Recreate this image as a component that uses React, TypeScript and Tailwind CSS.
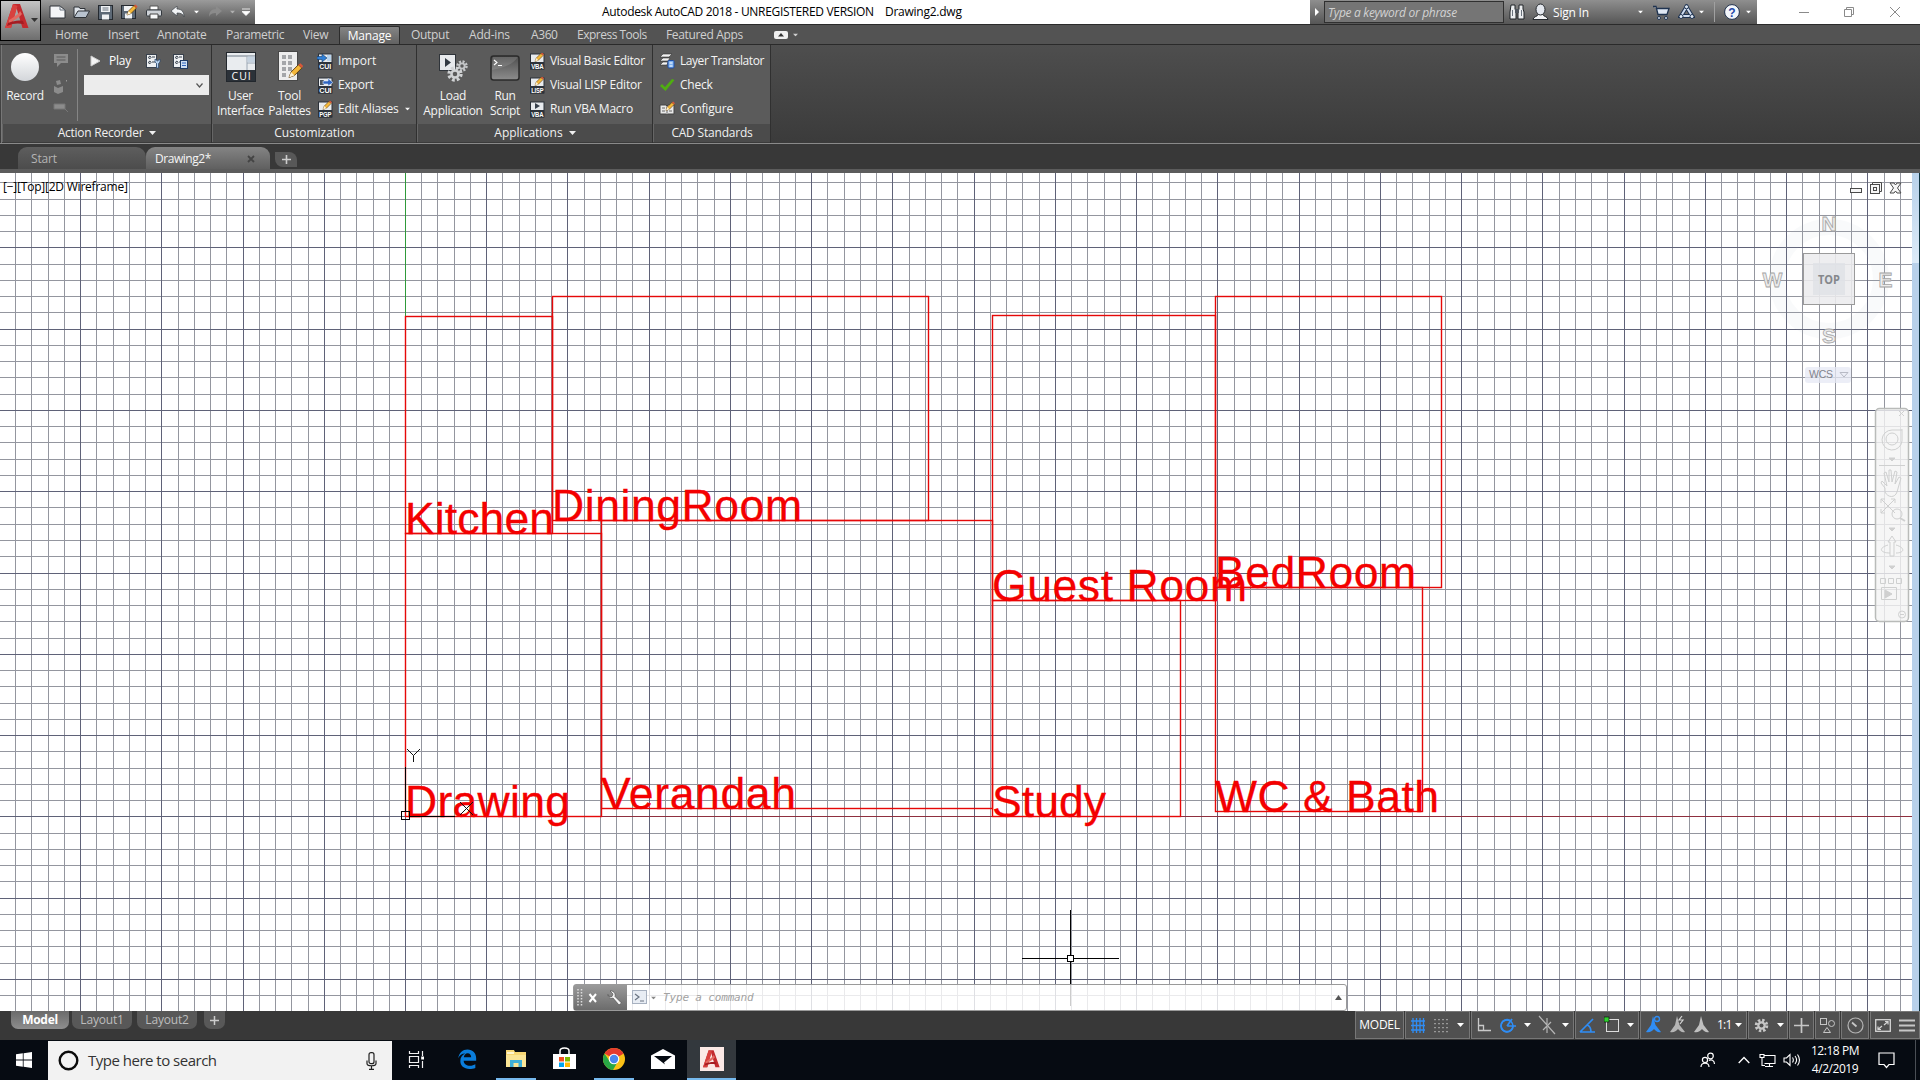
import React from "react";

type P = { children?: React.ReactNode; className?: string };

const Caret = ({ className = "" }: P) => (
  <svg width="7" height="4" viewBox="0 0 7 4" className={`shrink-0 ${className}`}><path d="M0 0h7L3.500 4z" fill="currentColor" /></svg>
);

const Svg = ({ children, w = 16, h = 16, vb, className = "" }: P & { w?: number; h?: number; vb?: string }) => (
  <svg width={w} height={h} viewBox={vb ?? `0 0 ${w} ${h}`} className={`shrink-0 ${className}`} fill="none">{children}</svg>
);

/* ---------- logo ---------- */
const LogoA = ({ w, h }: { w: number; h: number }) => (
  <svg width={w} height={h} viewBox="0 0 24 27" className="shrink-0">
    <path d="M8 1h7l8.500 24h-6L11.500 5 6 25H0z" fill="#c22a2e" />
    <path d="M8 1l4.500 2L6 25H0z" fill="#d8413f" />
    <path d="M4 17c5-3 10-6 11-9l2 3c-2 3-7 6-13 9z" fill="#e36a62" />
    <path d="M3 20c6-2 10-3 15-2l1 3c-6-1-11-1-17 2z" fill="#a51c22" />
  </svg>
);

/* ---------- small icons ---------- */
const Pencil = ({ x = 0, y = 0, s = 1 }: { x?: number; y?: number; s?: number }) => (
  <g transform={`translate(${x} ${y}) scale(${s})`}>
    <path d="M0 10l1.500-4L7 .500l2.500 2.500L4 8.500z" fill="#f5b83a" stroke="#5b3b10" strokeWidth=".7" />
    <path d="M7 .500L9.500 3l1-1.500L8.500-.500z" fill="#d9573a" />
    <path d="M0 10l1.500-4L4 8.500z" fill="#fff1d0" />
  </g>
);

const BadgeIcon = ({ label, kind }: { label: string; kind: "in" | "out" | "pen" | "play" }) => (
  <Svg w={16} h={17}>
    <rect x="1.500" y="1" width="13.500" height="15" fill="#e8ebee" stroke="#2b3038" />
    <rect x="1.500" y="9" width="13.500" height="7.500" fill="#2d333b" />
    <text x="8.300" y="15.500" fontSize="7" fontWeight="700" fill="#fff" textAnchor="middle" fontFamily="Liberation Sans, sans-serif" textLength="12" lengthAdjust="spacingAndGlyphs">{label}</text>
    {kind === "in" && <><path d="M10 2v6h4V2z" fill="#b8d4ee" /><path d="M0 3.500h5V1l5 4-5 4V6.500H0z" fill="#2f7fd6" stroke="#163a66" strokeWidth=".6" /></>}
    {kind === "out" && <><path d="M3 3h4v5H3z" fill="#4a5563" /><path d="M6 4h5V1.500L16 5.500 11 9V7H6z" fill="#2f65c0" stroke="#d9e6f7" strokeWidth=".6" /></>}
    {kind === "pen" && <Pencil x={6} y={0} s={0.85} />}
    {kind === "play" && <path d="M6 2l5 3-5 3z" fill="#39424e" />}
  </Svg>
);

const PlayListIcon = ({ alt = false }: { alt?: boolean }) => (
  <Svg w={16} h={16}>
    <rect x="1.500" y="1.500" width="10" height="13" fill="#eef0f2" stroke="#39424e" />
    <path d="M3.500 4l1.500-1 1 1.500L4.500 6zM3.500 9l1.500-1 1 1.500-1.500 1.500zM7 4h3M7 9h3" stroke="#39424e" strokeWidth="1" />
    {alt ? (
      <><rect x="8.500" y="7.500" width="7" height="8" fill="#cfe0f3" stroke="#1f3c66" /><path d="M10 10h4M10 12.500h4" stroke="#2f65c0" /></>
    ) : (
      <path d="M10 6v3l1.500 1.500V15h2v-4.500L15 9V6l-2.500 2z" fill="#b9d3ee" stroke="#26456f" strokeWidth=".7" />
    )}
  </Svg>
);

const Gear = ({ cx, cy, r, c, hole }: { cx: number; cy: number; r: number; c: string; hole: string }) => (
  <g>
    <circle cx={cx} cy={cy} r={r} fill="none" stroke={c} strokeWidth={r * 0.55} strokeDasharray={`${r * 0.45} ${r * 0.335}`} />
    <circle cx={cx} cy={cy} r={r * 0.8} fill={c} />
    <circle cx={cx} cy={cy} r={r * 0.38} fill={hole} />
  </g>
);

/* ---------- title bar ---------- */
const QuickAccess = () => (
  <div className="flex h-6 w-[214px] items-center bg-gradient-to-b from-[#9b9b9b] to-[#555] pl-[8px] text-white">
    <Svg w={17} h={14}><path d="M1 1h10l5 4v8H1z" fill="#f4f5f7" stroke="#2f3338" /><path d="M11 1v4h5" stroke="#6b7480" /></Svg>
    <Svg w={17} h={14} className="ml-[7px]"><path d="M1 12V2h5l1 1.500h5V6" fill="#dfe4ea" stroke="#2f3338" /><path d="M1 12.500L5 6h11.500L13 12.500z" fill="#b9c3cf" stroke="#2f3338" /></Svg>
    <Svg w={15} h={15} className="ml-[8px]"><rect x=".5" y=".5" width="14" height="14" fill="#5d6976" stroke="#252a30" /><path d="M3 1h9v6H3zM4 9.500h7v5H4z" fill="#f0f2f4" /><path d="M4.500 3h6M4.500 5h6" stroke="#69737f" /></Svg>
    <Svg w={17} h={16} className="ml-[8px]"><rect x=".5" y="1.500" width="14" height="13" fill="#5d6976" stroke="#252a30" /><path d="M3 2h9v5H3zM4 9.500h7v5H4z" fill="#f0f2f4" /><Pencil x={6} y={1} s={1} /></Svg>
    <Svg w={16} h={15} className="ml-[8px]"><path d="M4 1h8v4H4z" fill="#fff" stroke="#555" /><rect x=".5" y="5" width="15" height="6" rx="1" fill="#cfd3d8" stroke="#33383e" /><path d="M4 9h8v5H4z" fill="#f6f7f8" stroke="#444" /></Svg>
    <Svg w={15} h={12} className="ml-[8px]"><path d="M1 5l6-5v3c5 0 7 3 7 8-1-3-3-4-7-4v3z" fill="#f1f3f5" stroke="#41464c" strokeWidth=".7" /></Svg>
    <Caret className="ml-[8px] scale-75" />
    <Svg w={15} h={12} className="ml-[8px]"><path d="M14 5L8 0v3C3 3 1 6 1 11c1-3 3-4 7-4v3z" fill="#8b8b8b" /></Svg>
    <Caret className="ml-[6px] scale-75 text-[#b0b0b0]" />
    <Svg w={8} h={8} className="ml-[6px]"><path d="M0 1h8M0 3.500h8L4 7.500z" fill="#fff" stroke="#fff" strokeWidth=".8" /></Svg>
  </div>
);

const InfoBar = () => (
  <div className="flex h-6 w-[447px] items-center bg-gradient-to-b from-[#8f8f8f] to-[#565656] text-white">
    <Svg w={14} h={10}><path d="M5 1l4 4-4 4z" fill="#fff" /></Svg>
    <div className="flex h-[22px] w-[180px] items-center border border-[#303030] bg-[#757575] pl-[3px] pt-px text-[12px] italic tracking-[-0.3px] text-[#d2d2d2]">Type a keyword or phrase</div>
    <Svg w={16} h={16} className="ml-[5px]">
      <path d="M2 1h4v4l1 2v8H1V8zM10 1h4v4l1 3v7H9V7l1-2z" fill="#eceef0" stroke="#202428" /><path d="M6 5h4v4H6z" fill="#50565e" /><path d="M3.500 6v6M12.500 6v6" stroke="#6a737d" />
    </Svg>
    <Svg w={17} h={18} className="ml-[7px]"><path d="M1 16.500c0-3 5-3 5-5h5c0 2 5 2 5 5z" fill="#f2f3f5" stroke="#25292e" /><ellipse cx="8.500" cy="6.500" rx="4.500" ry="5.500" fill="#e3e7ee" stroke="#25292e" /></Svg>
    <span className="ml-[4px] w-[84px] pt-px text-[12px] tracking-[-0.2px]">Sign In</span>
    <Caret className="scale-75" />
    <Svg w={17} h={15} className="ml-[9px]"><path d="M0 1.500h3l2 8h9l2-6H4" fill="#dfe8f4" stroke="#1f3350" strokeWidth="1.300" /><circle cx="6" cy="13" r="1.500" fill="#dfe8f4" stroke="#1f3350" /><circle cx="13" cy="13" r="1.500" fill="#dfe8f4" stroke="#1f3350" /></Svg>
    <Svg w={17} h={16} className="ml-[8px]"><path d="M8.500 3L3 12h11z" stroke="#1f3350" strokeWidth="4" /><path d="M8.500 3L3 12h11z" stroke="#cfdcf0" strokeWidth="2" /><circle cx="8.500" cy="2.800" r="2" fill="#dfe8f4" stroke="#1f3350" /><circle cx="3" cy="12.500" r="2" fill="#dfe8f4" stroke="#1f3350" /><circle cx="14" cy="12.500" r="2" fill="#dfe8f4" stroke="#1f3350" /></Svg>
    <Caret className="ml-[3px] scale-75" />
    <div className="ml-[9px] h-5 w-px bg-[#a0a0a0]" />
    <Svg w={16} h={16} className="ml-[9px]"><circle cx="8" cy="8" r="7.400" fill="#f3f6fb" stroke="#20304c" /><text x="8" y="12.500" fontSize="12" fontWeight="700" fill="#2347a8" textAnchor="middle" fontFamily="Liberation Sans, sans-serif">?</text></Svg>
    <Caret className="ml-[5px] scale-75" />
  </div>
);

const TitleBar = () => (
  <div className="flex h-6 bg-white pl-[41px]">
    <QuickAccess />
    <div className="flex w-[1055px] items-center whitespace-pre pl-[347px] text-[12px] text-black">
      <span className="w-[283px] tracking-[-0.32px]">Autodesk AutoCAD 2018 - UNREGISTERED VERSION</span>
      <span className="tracking-[-0.25px]">Drawing2.dwg</span>
    </div>
    <InfoBar />
    <div className="flex items-center pl-[41px]">
      <Svg w={12} h={12}><path d="M1 6.500h10" stroke="#8a8a8a" /></Svg>
      <Svg w={12} h={12} className="ml-[33px]"><path d="M3.500 3V1.500h7v7H9M1.500 3.500h7v7h-7z" stroke="#8a8a8a" /></Svg>
      <Svg w={12} h={12} className="ml-[34px]"><path d="M1 1l10 10M11 1L1 11" stroke="#8a8a8a" /></Svg>
    </div>
  </div>
);

/* ---------- ribbon ---------- */
const RibbonTabs = () => (
  <div className="flex h-[21px] items-center border-b border-t border-[#2a2a2a] bg-[#535353] pl-[55px] text-[12px] text-[#d0d0d0]">
    <span className="w-[53px] tracking-[-0.2px]">Home</span>
    <span className="w-[49px] tracking-[-0.2px]">Insert</span>
    <span className="w-[69px] tracking-[-0.25px]">Annotate</span>
    <span className="w-[77px] tracking-[-0.3px]">Parametric</span>
    <span className="w-[36px] tracking-[-0.2px]">View</span>
    <span className="flex h-[18px] w-[61px] items-center justify-center self-end rounded-t-[2px] border-x border-t border-[#2c2c2c] bg-gradient-to-b from-[#858585] to-[#626262] tracking-[-0.2px] text-white">Manage</span>
    <span className="ml-[11px] w-[58px] tracking-[-0.3px]">Output</span>
    <span className="w-[62px] tracking-[-0.2px]">Add-ins</span>
    <span className="w-[46px] tracking-[-0.4px]">A360</span>
    <span className="w-[89px] tracking-[-0.5px]">Express Tools</span>
    <span className="w-[108px] tracking-[-0.35px]">Featured Apps</span>
    <Svg w={14} h={8}><rect width="14" height="8" rx="2" fill="#f0f0f0" /><path d="M4 5.500L7 2l3 3.500z" fill="#333" /></Svg>
    <Caret className="ml-[4px] scale-75" />
  </div>
);

const Panel = ({ title, children, className = "", arrow = false }: P & { title: string; arrow?: boolean }) => (
  <div className={`flex h-[98px] flex-col border-r border-[#303030] ${className}`}>
    <div className="flex h-[79px] bg-[#5b5b5b] pt-[4px]">{children}</div>
    <div className="flex h-[18px] items-center justify-center gap-[6px] border-l border-[#666] bg-[#4b4b4b] text-[12px] text-[#f0f0f0]">
      {title}
      {arrow && <Caret />}
    </div>
  </div>
);

const Small = ({ icon, children, className = "" }: P & { icon: React.ReactNode }) => (
  <div className={`flex h-6 items-center whitespace-nowrap text-[12px] text-[#f4f4f4] ${className}`}>
    <span className="mr-[5px] flex w-4 justify-center">{icon}</span>
    {children}
  </div>
);

const Large = ({ icon, lines, className = "" }: { icon: React.ReactNode; lines: string[]; className?: string }) => (
  <div className={`flex flex-col items-center text-center text-[12px] leading-[15px] tracking-[-0.3px] text-[#f4f4f4] ${className}`}>
    <div className="mb-[4px] flex h-[35px] items-center justify-center">{icon}</div>
    {lines.map((l) => <span key={l} className="whitespace-nowrap">{l}</span>)}
  </div>
);

const Ribbon = () => (
  <div className="flex h-[99px] border-b border-[#8a8a8a] bg-gradient-to-b from-[#4e4e4e] to-[#3b3b3b] pl-px">
    <Panel title="Action Recorder" arrow className="w-[211px] border-l border-l-[#777] tracking-[-0.25px]">
      <Large className="w-[46px]" icon={<Svg w={30} h={30}><defs><linearGradient id="rec" x1="0" y1="0" x2="0" y2="1"><stop offset="0" stopColor="#fff" /><stop offset="1" stopColor="#d3d6da" /></linearGradient></defs><circle cx="15" cy="15" r="14" fill="url(#rec)" /></Svg>} lines={["Record"]} />
      <div className="flex w-[25px] flex-col items-center pt-[4px] text-[#8c8c8c]">
        <Svg w={16} h={14}><path d="M1 1h14v9H8l-4 4v-4H1z" fill="#8c8c8c" /><path d="M3.500 4h9M3.500 7h9" stroke="#5b5b5b" /></Svg>
        <Svg w={16} h={15} className="mt-[12px]"><path d="M1 7l4 2 5-2v6l-5 2-4-2zM3 2l4-1 1 4-4 1z" fill="#8c8c8c" /><path d="M13.500 1v1.500" stroke="#999" /></Svg>
        <Svg w={16} h={10} className="mt-[8px]"><path d="M1 2h11v5H1zM12 7l3 3" fill="#8c8c8c" stroke="#777" /></Svg>
      </div>
      <div className="ml-[4px] h-[72px] w-px bg-[#858585]" />
      <div className="w-[132px] pl-[6px]">
        <div className="flex h-6 items-center text-[12px] text-white">
          <Svg w={11} h={12} className="ml-[6px]"><path d="M1 1l9 5-9 5z" fill="#f5f5f5" stroke="#ccc" /></Svg>
          <span className="ml-[8px] w-[36px]">Play</span>
          <PlayListIcon /><span className="w-[11px]" /><PlayListIcon alt />
        </div>
        <div className="mt-[2px] flex h-[20px] w-[125px] items-center justify-end bg-[#ececec] pr-[6px]">
          <Svg w={7} h={5}><path d="M.5.500l3 3.500 3-3.500" stroke="#555" strokeWidth="1.200" /></Svg>
        </div>
      </div>
    </Panel>
    <Panel title="Customization" className="w-[205px]">
      <Large className="w-[55px] pl-[2px]" icon={<Svg w={30} h={30}><rect x=".5" y=".5" width="29" height="29" fill="#e9ecef" stroke="#22272d" /><path d="M1 4h28" stroke="#6f7a87" /><path d="M21 4v14M21 11h8" stroke="#9aa6b3" /><rect x="21.500" y="4.500" width="7.500" height="6" fill="#c5d2df" /><rect x="1" y="18" width="28" height="11" fill="#2b3138" /><text x="15" y="27.500" fontSize="10.500" fill="#fff" textAnchor="middle" fontFamily="Open Sans, sans-serif" textLength="19">CUI</text></Svg>} lines={["User", "Interface"]} />
      <Large className="ml-[-1px] w-[47px]" icon={<Svg w={30} h={31}><rect x="3.500" y=".5" width="19" height="29" fill="#ededed" stroke="#474747" /><g fill="#a4a6a9"><rect x="7" y="4" width="4" height="4" /><rect x="13" y="4" width="4" height="4" /><rect x="7" y="10" width="4" height="4" /><rect x="13" y="10" width="4" height="4" /><rect x="7" y="16" width="4" height="4" /><rect x="13" y="16" width="4" height="4" /><rect x="7" y="22" width="4" height="4" /></g><Pencil x={14} y={13} s={1.35} /></Svg>} lines={["Tool", "Palettes"]} />
      <div className="ml-[4px]">
        <Small icon={<BadgeIcon label="CUI" kind="in" />}>Import</Small>
        <Small className="tracking-[-0.2px]" icon={<BadgeIcon label="CUI" kind="out" />}>Export</Small>
        <Small className="tracking-[-0.2px]" icon={<BadgeIcon label="PGP" kind="pen" />}><span>Edit Aliases</span><Caret className="ml-[5px] scale-75" /></Small>
      </div>
    </Panel>
    <Panel title="Applications" arrow className="w-[236px]">
      <Large className="w-[71px] pl-[1px]" icon={<Svg w={30} h={30}><rect x="1.500" y="2.500" width="16" height="16" fill="#e7e9ec" stroke="#2f343a" /><path d="M7 6l6 4.500L7 15z" fill="#333a43" /><Gear cx={24} cy={14} r={4.5} c="#c4c6c8" hole="#5b5b5b" /><Gear cx={17} cy={22} r={6} c="#d0d2d4" hole="#5b5b5b" /></Svg>} lines={["Load", "Application"]} />
      <Large className="w-[34px]" icon={<Svg w={30} h={30}><defs><linearGradient id="scr" x1="0" y1="0" x2="0" y2="1"><stop offset="0" stopColor="#4e4e4e" /><stop offset="1" stopColor="#8d8d8d" /></linearGradient></defs><rect x="1" y="4" width="28" height="24" rx="2.500" fill="url(#scr)" stroke="#2b2b2b" strokeWidth="1.500" /><path d="M2 18C10 16 22 14 28 5H3z" fill="#fff" opacity=".12" /><path d="M4 8l3 2.500L4 13M8 13.500h4" stroke="#fff" strokeWidth="1.100" /></Svg>} lines={["Run", "Script"]} />
      <div className="ml-[7px]">
        <Small className="tracking-[-0.36px]" icon={<BadgeIcon label="VBA" kind="pen" />}>Visual Basic Editor</Small>
        <Small className="tracking-[-0.25px]" icon={<BadgeIcon label="LISP" kind="pen" />}>Visual LISP Editor</Small>
        <Small className="tracking-[-0.25px]" icon={<BadgeIcon label="VBA" kind="play" />}>Run VBA Macro</Small>
      </div>
    </Panel>
    <Panel title="CAD Standards" className="w-[118px] tracking-[-0.2px]">
      <div className="ml-[6px]">
        <Small className="tracking-[-0.45px]" icon={<Svg w={16} h={16}><path d="M4 1h9l-3 3H1zM4 5h7l-2 3H1zM4 9h5l-1 3H1z" fill="#f2f2f2" stroke="#333" strokeWidth=".6" /><rect x="9" y="7.500" width="6" height="7.500" rx="1" fill="#7fb2f0" stroke="#1e4fa8" /><path d="M10.500 10h3M10.500 13h3" stroke="#fff" /></Svg>}>Layer Translator</Small>
        <Small icon={<Svg w={16} h={16}><path d="M1 9l2-2 3 3 7-8 2.500 1L6.500 14z" fill="#4fae10" /></Svg>}>Check</Small>
        <Small icon={<Svg w={16} h={16}><path d="M1 4h6l1 1 1-1h6v9H9l-1 1-1-1H1z" fill="#e9e9e9" stroke="#444" /><path d="M3 7h3M3 10h3M10 10h3M8 5v9" stroke="#666" /><Pencil x={7} y={1} s={0.85} /></Svg>}>Configure</Small>
      </div>
    </Panel>
  </div>
);

const FileTabs = () => (
  <div className="flex h-[29px] items-end border-b-4 border-[#5c5c5c] bg-[#383838] pl-[18px] text-[12px]">
    <div className="flex h-[22px] w-[128px] items-center rounded-tl-[9px] rounded-tr-[10px] bg-gradient-to-b from-[#5e5e5e] to-[#4c4c4c] pl-[13px] pt-px tracking-[-0.2px] text-[#b4b4b4]">Start</div>
    <div className="flex h-[22px] w-[124px] items-center rounded-t-[9px] bg-gradient-to-b from-[#848484] to-[#606060] pl-[9px] pt-px text-[#f5f5f5]">
      <span className="w-[92px] tracking-[-0.45px]">Drawing2*</span>
      <Svg w={8} h={8}><path d="M1 1l6 6M7 1L1 7" stroke="#444" strokeWidth="1.800" /></Svg>
    </div>
    <div className="mb-[2px] ml-[5px] flex h-[15px] w-[22px] items-center justify-center rounded-bl-[8px] rounded-tr-[8px] bg-[#585858]">
      <Svg w={9} h={9}><path d="M4.500 0v9M0 4.500h9" stroke="#ccc" strokeWidth="1.600" /></Svg>
    </div>
  </div>
);

/* ---------- drawing area ---------- */
const PITCH_X = 16.248;
const PITCH_Y = 16.256;
const OX = 405.5;
const OY = 816.35;
const colX = (k: number) => Math.floor(OX + k * PITCH_X);
const rowY = (k: number) => Math.round(OY + k * PITCH_Y);
const cols = Array.from({ length: 118 }, (_, i) => i - 24).filter((k) => colX(k) < 1912 && colX(k) > 0);
const rows = Array.from({ length: 52 }, (_, i) => i - 39).filter((k) => rowY(k) > 173 && rowY(k) < 1011);

const rooms: { name: string; x: number; y: number; r: number; b: number; len: number }[] = [
  { name: "Kitchen", x: 405, y: 316, r: 552, b: 533, len: 149 },
  { name: "Drawing", x: 405, y: 533, r: 601, b: 816, len: 165 },
  { name: "DiningRoom", x: 552, y: 296, r: 928, b: 520, len: 250 },
  { name: "Verandah", x: 601, y: 520, r: 992, b: 808, len: 195 },
  { name: "Guest Room", x: 992, y: 315, r: 1215, b: 600, len: 255 },
  { name: "Study", x: 992, y: 600, r: 1180, b: 816, len: 114 },
  { name: "BedRoom", x: 1215, y: 296, r: 1441, b: 587, len: 201 },
  { name: "WC & Bath", x: 1215, y: 587, r: 1422, b: 811, len: 224 },
];

const Plan = () => (
  <svg width="1912" height="838" viewBox="0 173 1912 838" className="block" fill="none">
    <rect x="0" y="173" width="1912" height="838" fill="#fff" />
    <g shapeRendering="crispEdges">
      {cols.filter((k) => k % 5).map((k) => <rect key={k} x={colX(k)} y="173" width="1" height="838" fill="#94969f" />)}
      {rows.filter((k) => k % 5).map((k) => <rect key={k} x="0" y={rowY(k)} width="1912" height="1" fill="#94969f" />)}
      {cols.filter((k) => k % 5 === 0).map((k) => <rect key={k} x={colX(k)} y="173" width="1" height="838" fill="#5f6278" />)}
      {rows.filter((k) => k % 5 === 0).map((k) => <rect key={k} x="0" y={rowY(k)} width="1912" height="1" fill="#5f6278" />)}
      <rect x="405" y="173" width="1" height="143" fill="#2f9a3a" />
      <rect x="405" y="816" width="1507" height="1" fill="#8f2f3f" />
    </g>
    <g stroke="#e60808" strokeWidth="1.400">
      {rooms.map((m) => <rect key={m.name} x={m.x + 0.5} y={m.y + 0.5} width={m.r - m.x} height={m.b - m.y} />)}
    </g>
    <g fill="#f40000" stroke="#f40000" strokeWidth=".3" fontFamily="Liberation Sans, Arial, sans-serif" fontSize="44.500">
      {rooms.map((m) => <text key={m.name} x={m.x} y={m.b + 0.7} textLength={m.len}>{m.name}</text>)}
    </g>
    <g stroke="#000" shapeRendering="crispEdges">
      <path d="M405.500 767v45M409 816.500h46" />
      <rect x="401.500" y="811.500" width="8" height="8" />
    </g>
    <path d="M407 749l6.500 6.500L420 749M413.500 755.500v6.500M460 802l13 13M473 802l-13 13" stroke="#111" />
    <g stroke="#000" shapeRendering="crispEdges">
      <path d="M1070.500 910v45M1070.500 962v44M1022 958.500h46M1074 958.500h45" />
      <rect x="1067.500" y="955.500" width="6" height="6" fill="#fff" />
    </g>
  </svg>
);

const ViewCube = () => (
  <svg width="140" height="220" viewBox="1758 190 140 220" className="absolute left-[1758px] top-[17px]" fill="none">
    <circle cx="1829" cy="279" r="52" stroke="#aab4c4" strokeOpacity=".07" strokeWidth="16" />
    <rect x="1803.500" y="253.500" width="51" height="51" fill="#ececee" fillOpacity=".88" stroke="#9a9a9a" />
    <rect x="1813" y="263" width="32" height="32" fill="#dfe1e6" fillOpacity=".8" />
    <text x="1829" y="283.800" fontSize="13" fontWeight="700" fill="#85888c" textAnchor="middle" textLength="22" lengthAdjust="spacingAndGlyphs" fontFamily="Open Sans, sans-serif">TOP</text>
    <g fontFamily="Liberation Sans, sans-serif" fontSize="21" fontWeight="700" fill="#ececec" stroke="#a5a5a5" strokeWidth=".8" textAnchor="middle">
      <text x="1829" y="231">N</text><text x="1829" y="342.500">S</text><text x="1772.500" y="287">W</text><text x="1885.500" y="287">E</text>
    </g>
    <rect x="1805" y="367" width="46" height="16" rx="3" fill="#e6e8f4" fillOpacity=".75" />
    <text x="1809" y="378" fontSize="10.500" fill="#80838c" textLength="24" fontFamily="Liberation Sans, sans-serif">WCS</text>
    <path d="M1840 372.500h8l-4 4.500z" stroke="#b7bac5" />
  </svg>
);

const NavBar = () => (
  <svg width="36" height="216" viewBox="1874 407 36 216" className="absolute left-[1874px] top-[234px]" fill="none" stroke="#cfd0d0" strokeWidth="1">
    <rect x="1875.500" y="408.500" width="33" height="213" rx="4" fill="#f4f4f4" fillOpacity=".8" stroke="#b9bbb9" strokeWidth="1.500" />
    <path d="M1899 411l5 5M1904 411l-5 5" />
    <path d="M1902 429v12a10 10 0 1 1-10-11h10" /><circle cx="1892" cy="439" r="6" />
    <path d="M1889 458h6l-3 3zM1889 528h6l-3 3zM1889 566h6l-3 3z" fill="#d0d0d0" />
    <path d="M1879 465.500h26" />
    <path d="M1885 488l-4-5 1-2 5 5-3-13 2-1 3 10 0-12 2 0 1 12 3-11 2 1-2 12 4-7 2 1-4 14c-2 6-9 6-12 0z" />
    <path d="M1881 499l14 14M1895 499l-14 14M1881 503v-4h4M1891 499h4v4M1881 509v4h4" /><circle cx="1897" cy="514" r="5" /><path d="M1900 518l5 3" strokeWidth="2" />
    <path d="M1890 556v-14h-2l4-6 4 6h-2v14zM1888 545c-10 3-8 8 2 8M1896 545c10 3 8 8 0 8" />
    <path d="M1880.500 578.500h5v5h-5zM1888.500 578.500h5v5h-5zM1896.500 578.500h5v5h-5zM1881.500 587.500h15v12h-15z" /><path d="M1885 590l7 4-7 4z" fill="#d0d0d0" />
    <circle cx="1902" cy="614.500" r="3.500" /><path d="M1900 614.500h4" />
  </svg>
);

const CommandBar = () => (
  <div className="absolute left-[573px] top-[811px] flex h-[27px] w-[774px] items-center rounded-[3px] border border-[#9a9a9a] bg-white/80">
    <div className="flex h-full w-[53px] items-center bg-gradient-to-b from-[#9a9a9a] to-[#6c6c6c]">
      <Svg w={6} h={18} className="ml-[3px]"><path d="M1 0v18M4.500 0v18" stroke="#ddd" strokeWidth="1.500" strokeDasharray="1.500 1.500" /></Svg>
      <Svg w={10} h={10} className="ml-[5px]"><path d="M1.500 1l6.500 8M8 1L1.500 9" stroke="#fff" strokeWidth="2" /></Svg>
      <Svg w={16} h={16} className="ml-[9px]"><path d="M3 1l3 3-1 2.500L2.500 7 1 4.500C1 8 4 9 6 8l6 7 2.500-2L8 6.500C9 3 6 .500 3 1z" fill="#f4f4f4" stroke="#444" strokeWidth=".6" /></Svg>
    </div>
    <Svg w={16} h={15} className="ml-[5px]"><rect x=".5" y=".5" width="14" height="13" fill="#e8edf4" stroke="#a7b1c0" /><path d="M3 4l4 3-4 3M8 11h4" stroke="#6a7482" strokeWidth="1.200" /></Svg>
    <Caret className="ml-[2px] scale-75 text-[#888]" />
    <span className="ml-[6px] pt-px font-['DejaVu_Sans_Mono','Liberation_Mono',monospace] text-[11px] italic tracking-[-0.16px] text-[#a2a2a2]">Type a command</span>
    <Svg w={7} h={5} className="ml-auto mr-[4px]"><path d="M0 5h7L3.500 0z" fill="#555" /></Svg>
  </div>
);

const Viewport = () => (
  <div className="relative flex h-[838px] bg-white">
    <Plan />
    <div className="w-[7px] bg-[#b8d1ea]"><div className="h-[90px] bg-gradient-to-b from-[#b8d1ea] to-[#dcebf8]" /></div>
    <div className="w-px bg-[#0d3340]" />
    <div className="absolute left-[3px] top-[6px] text-[12px] leading-[16px] tracking-[-0.22px] text-black">[−][Top][2D Wireframe]</div>
    <svg width="54" height="14" viewBox="0 0 54 14" className="absolute left-[1849px] top-[8px]" fill="#f6f6f6" stroke="#4a4a4a">
      <rect x="1.500" y="7.500" width="11" height="4" />
      <path d="M23.500 3.500v-2h9v9h-2" /><rect x="21.500" y="3.500" width="9" height="9" /><rect x="24.500" y="6.500" width="3" height="3" />
      <path d="M41 2h4l1.500 2L48 2h4l-3.500 5 3.500 5h-4l-1.500-2-1.500 2h-4l3.500-5z" />
    </svg>
    <ViewCube />
    <NavBar />
    <CommandBar />
  </div>
);

/* ---------- status bar ---------- */
const LayoutTab = ({ children, active = false, className = "" }: P & { active?: boolean }) => (
  <div className={`flex h-[18px] items-center justify-center rounded-b-[7px] text-[12px] ${active ? "bg-gradient-to-b from-[#6a6a6a] to-[#8e8e8e] font-bold text-white" : "bg-[#585858] text-[#bdbdbd]"} ${className}`}>{children}</div>
);

const Cell = ({ children, className = "" }: P) => (
  <div className={`flex h-[28px] items-center border border-[#777] bg-[#505050] text-white ${className}`}>{children}</div>
);

const Person = ({ c, extra }: { c: string; extra?: React.ReactNode }) => (
  <Svg w={18} h={20}><path d="M8 1l2.500 9 5.500 7c-3 1-5-1-7-3-2 2-4 4-8 3l5-7z" fill={c} />{extra}</Svg>
);

const StatusBar = () => (
  <div className="flex h-[29px] items-start bg-[#383838] pl-[11px]">
    <LayoutTab active className="w-[58px] tracking-[-0.3px]">Model</LayoutTab>
    <LayoutTab className="ml-[3px] w-[60px] tracking-[-0.2px]">Layout1</LayoutTab>
    <LayoutTab className="ml-[5px] w-[60px] tracking-[-0.2px]">Layout2</LayoutTab>
    <LayoutTab className="ml-[7px] w-[21px]"><Svg w={9} h={9}><path d="M4.500 0v9M0 4.500h9" stroke="#ccc" strokeWidth="1.500" /></Svg></LayoutTab>
    <div className="ml-auto flex gap-px">
      <Cell className="w-[49px] justify-center text-[12px] tracking-[-0.3px]">MODEL</Cell>
      <Cell className="w-[65px] pl-[4px]">
        <Svg w={16} h={17}><path d="M3 1v15M6.500 1v15M10 1v15M13.500 1v15M1 4h14M1 8.500h14M1 13h14" stroke="#2f8df5" strokeWidth="1.300" /></Svg>
        <Svg w={15} h={15} className="ml-[8px]"><path d="M1 1v14M5 1v14M9 1v14M13 1v14" stroke="#c9c9c9" strokeWidth="1.200" strokeDasharray="1.200 2.800" /></Svg>
        <Caret className="ml-[8px]" />
      </Cell>
      <Cell className="w-[103px] pl-[5px]">
        <Svg w={14} h={14}><path d="M1.500 0v12.500H14M1.500 7.500h5v5" stroke="#c9c9c9" strokeWidth="1.300" /></Svg>
        <Svg w={17} h={17} className="ml-[8px]"><path d="M14 8.500A6 6 0 1 1 11 3.500M8 9h9M8 9l5-7" stroke="#2f8df5" strokeWidth="1.700" /><circle cx="8" cy="9" r="6" stroke="#2f8df5" strokeWidth="1.500" /></Svg>
        <Caret className="ml-[8px]" />
        <Svg w={18} h={20} className="ml-[7px]"><path d="M1 1l16 18M9 3v6M9 12v6M13 7l-8 8" stroke="#b5b5b5" strokeWidth="1.200" /></Svg>
        <Caret className="ml-[6px]" />
      </Cell>
      <Cell className="w-[64px] pl-[3px]">
        <Svg w={17} h={17}><path d="M1 15h15M1 15L14 2M8 8c3 1 4 4 4 7" stroke="#2f8df5" strokeWidth="1.700" /></Svg>
        <Svg w={16} h={18} className="ml-[8px]"><rect x="2.500" y="3.500" width="12" height="12" stroke="#ddd" /><rect width="5" height="5" x="0" y="1" fill="#2fd02f" stroke="#000" strokeWidth=".6" /></Svg>
        <Caret className="ml-[7px]" />
      </Cell>
      <Cell className="w-[107px] pl-[4px]">
        <Person c="#2f8df5" extra={<circle cx="12" cy="4" r="2.500" stroke="#2f8df5" strokeWidth="1.400" fill="#505050" />} />
        <span className="w-[6px]" /><Person c="#b5b5b5" extra={<path d="M13 1l-3 4h4l-3 4" stroke="#d5d5d5" strokeWidth="1.200" />} />
        <span className="w-[6px]" /><Person c="#c0c0c0" />
        <span className="ml-[6px] w-[18px] text-[12px] tracking-[-0.8px]">1:1</span><Caret />
      </Cell>
      <Cell className="w-[40px] pl-[5px]">
        <Svg w={15} h={15}><Gear cx={7.500} cy={7.500} r={5.3} c="#c6c6c6" hole="#505050" /></Svg>
        <Caret className="ml-[8px]" />
      </Cell>
      <Cell className="w-[25px] justify-center"><Svg w={15} h={15}><path d="M7.500 0v15M0 7.500h15" stroke="#c6c6c6" strokeWidth="1.700" /></Svg></Cell>
      <Cell className="w-[25px] justify-center"><Svg w={17} h={17}><rect x="1.500" y="1.500" width="6" height="6" stroke="#c6c6c6" /><circle cx="12.500" cy="6.500" r="3" stroke="#c6c6c6" /><path d="M8 10.500l3.500 5h-7z" stroke="#c6c6c6" /></Svg></Cell>
      <Cell className="w-[28px] justify-center"><Svg w={17} h={17}><circle cx="8.500" cy="8.500" r="7.500" stroke="#b5b5b5" strokeWidth="1.200" /><path d="M5 5.500l4.500 4" stroke="#c6c6c6" strokeWidth="1.700" /></Svg></Cell>
      <Cell className="w-[50px] pl-[4px]">
        <Svg w={16} h={13}><rect x=".7" y=".7" width="14.600" height="11.600" stroke="#d5d5d5" strokeWidth="1.300" /><path d="M9 6l4-3.500M10 2.500h3v3M7 7l-4 3.500M3 7.500v3h3" stroke="#d5d5d5" strokeWidth="1.200" /></Svg>
        <Svg w={16} h={13} className="ml-[8px]"><path d="M0 1.500h16M0 6.500h16M0 11.500h16" stroke="#c6c6c6" strokeWidth="1.800" /></Svg>
      </Cell>
    </div>
  </div>
);

/* ---------- taskbar ---------- */
const TaskButton = ({ children, open = false, active = false }: P & { open?: boolean; active?: boolean }) => (
  <div className={`flex h-10 w-[49px] flex-col items-center ${active ? "bg-[#33383d]" : ""}`}>
    <div className="flex flex-1 items-center">{children}</div>
    <div className={`h-[2px] ${active ? "w-full" : "w-10"} ${open || active ? "bg-[#76b9ed]" : ""}`} />
  </div>
);

const Taskbar = () => (
  <div className="flex h-10 items-center bg-[#060b12] font-['Open_Sans','Noto_Sans',sans-serif]">
    <div className="flex w-12 justify-center"><Svg w={16} h={16}><path d="M0 2.300L6.800 1.300v6.300H0zM7.600 1.200L16 0v7.600H7.600zM0 8.400h6.800v6.300L0 13.700zM7.600 8.400H16V16l-8.400-1.200z" fill="#fff" /></Svg></div>
    <div className="flex h-[39px] w-[344px] items-center self-end bg-[#f2f2f2] pl-[10px]">
      <Svg w={21} h={21}><circle cx="10.500" cy="10.500" r="8.800" stroke="#0a0a0a" strokeWidth="2.400" /></Svg>
      <span className="ml-[9px] w-[278px] text-[15px] tracking-[-0.5px] text-[#333]">Type here to search</span>
      <Svg w={11} h={18}><rect x="3" y=".7" width="5" height="11" rx="2" stroke="#222" strokeWidth="1.200" /><path d="M1 8.500v3c0 3 9 3 9 0v-3M5.500 14v3M3 17.300h5" stroke="#222" strokeWidth="1.200" /></Svg>
    </div>
    <TaskButton><Svg w={17} h={17}><path d="M1.500 0v2.500h9V0M1.500 5.500h9v6h-9zM1.500 17v-2.500h9V17M14.500 0v5M14.500 10v7" stroke="#f0f0f0" strokeWidth="1.200" /><rect x="13.200" y="5.500" width="2.800" height="3" fill="#fff" /></Svg></TaskButton>
    <div className="flex pl-px">
      <TaskButton><Svg w={20} h={20} vb="0 0 24 24"><path d="M1.500 11C2.500 4 7 .500 12.500.500 19 .500 23 5 23 11v3H8c.2 4 3.500 6 7.500 6 2.500 0 4.800-.7 6.500-1.800v4.500C20 23.500 17.500 24 15 24 8 24 4 20 4 14.500c0-4 2-7.500 6-9C5.500 5.500 3 8 1.500 11zM8.200 9.800H17C17 7 15.500 5 12.800 5 10.200 5 8.500 7 8.200 9.800z" fill="#0a7ddb" /></Svg></TaskButton>
      <TaskButton open><Svg w={22} h={20}><path d="M1 1h8l1 2h11v15H1z" fill="#f7d774" /><path d="M2 3h7v2H2z" fill="#fff6d0" /><path d="M1 6h20v12H1z" fill="#fbe596" /><path d="M5 18v-7h12v7h-3.500v-4h-5v4z" fill="#3fb0d8" /></Svg></TaskButton>
      <TaskButton><Svg w={23} h={24}><path d="M0 7h23v15H0z" fill="#fff" /><path d="M7 9V4c0-4 9-4 9 0v5" stroke="#fff" strokeWidth="1.500" /><path d="M6 10h5v4.500H6z" fill="#f25022" /><path d="M12 10h5v4.500h-5z" fill="#7fba00" /><path d="M6 15.500h5V20H6z" fill="#00a4ef" /><path d="M12 15.500h5V20h-5z" fill="#ffb900" /></Svg></TaskButton>
      <TaskButton open><Svg w={22} h={22}><circle cx="11" cy="11" r="11" fill="#fbc116" /><path d="M11 11L1.500 5.500A11 11 0 0 1 20.500 5.500z" fill="#e33b2e" /><path d="M20.500 5.500H11v5.500z" fill="#e33b2e" /><path d="M1.500 5.500A11 11 0 0 0 10 22l4.800-8.500L6.500 13z" fill="#28a745" /><circle cx="11" cy="11" r="5.300" fill="#fff" /><circle cx="11" cy="11" r="4.200" fill="#4a87ee" /></Svg></TaskButton>
      <TaskButton><Svg w={24} h={20}><path d="M0 6.500L12 0l12 6.500V20H0z" fill="#fff" /><path d="M3 7h18l-8 6.500 1 2z" fill="#060b12" /></Svg></TaskButton>
      <TaskButton active><div className="flex h-6 w-6 items-center justify-center bg-[#fbe9e6]"><LogoA w={17} h={20} /></div></TaskButton>
    </div>
    <div className="ml-auto flex items-center text-white">
      <Svg w={16} h={16}><circle cx="10.500" cy="4" r="2.800" stroke="#fff" strokeWidth="1.200" /><circle cx="5" cy="8" r="2.600" stroke="#fff" strokeWidth="1.200" /><path d="M1 15c0-5 8-5 8 0M9 8.500c2-1.500 5.500-.5 5.500 3.500" stroke="#fff" strokeWidth="1.200" /></Svg>
      <Svg w={12} h={8} className="ml-[22px]"><path d="M.7 7L6 1.500 11.300 7" stroke="#fff" strokeWidth="1.300" /></Svg>
      <Svg w={17} h={15} className="ml-[9px]"><path d="M5 2.500h11v8H5.500M10.500 10.500v3M6 13.500h8M1 1.500h4v3H1zM3 4.500v8h3" stroke="#fff" strokeWidth="1.100" /></Svg>
      <Svg w={18} h={16} className="ml-[7px]"><path d="M1 6h2.500L7 2.500v11L3.500 10H1zM9.500 5.500c1 1.500 1 3.500 0 5M12 4c2 2.500 2 5.500 0 8M14.500 2.500c2.500 3.500 2.500 7.500 0 11" stroke="#fff" strokeWidth="1.100" /></Svg>
      <div className="ml-[9px] flex w-[50px] flex-col items-center whitespace-nowrap text-[12px] leading-[18px] tracking-[-0.45px]"><span>12:18 PM</span><span>4/2/2019</span></div>
      <Svg w={17} h={17} className="ml-[18px]"><path d="M1 1h15v11.500h-5L8.500 15.500 6 12.500H1z" stroke="#fff" strokeWidth="1.200" /></Svg>
      <div className="ml-[20px] mr-[4px] h-10 w-px bg-[#4a4f55]" />
    </div>
  </div>
);

export default function App() {
  return (
    <div className="relative flex h-[1080px] w-[1920px] flex-col overflow-hidden bg-[#383838] font-['Open_Sans','Noto_Sans',sans-serif]">
      <TitleBar />
      <RibbonTabs />
      <Ribbon />
      <FileTabs />
      <Viewport />
      <StatusBar />
      <Taskbar />
      <div className="absolute left-0 top-0 flex h-[41px] w-[41px] items-start border border-black bg-gradient-to-b from-[#c4c4c4] to-[#6e6e6e] pl-[4px] pt-[2px] text-[#333]">
        <LogoA w={24} h={27} />
        <Caret className="ml-[2px] mt-[15px]" />
      </div>
    </div>
  );
}
